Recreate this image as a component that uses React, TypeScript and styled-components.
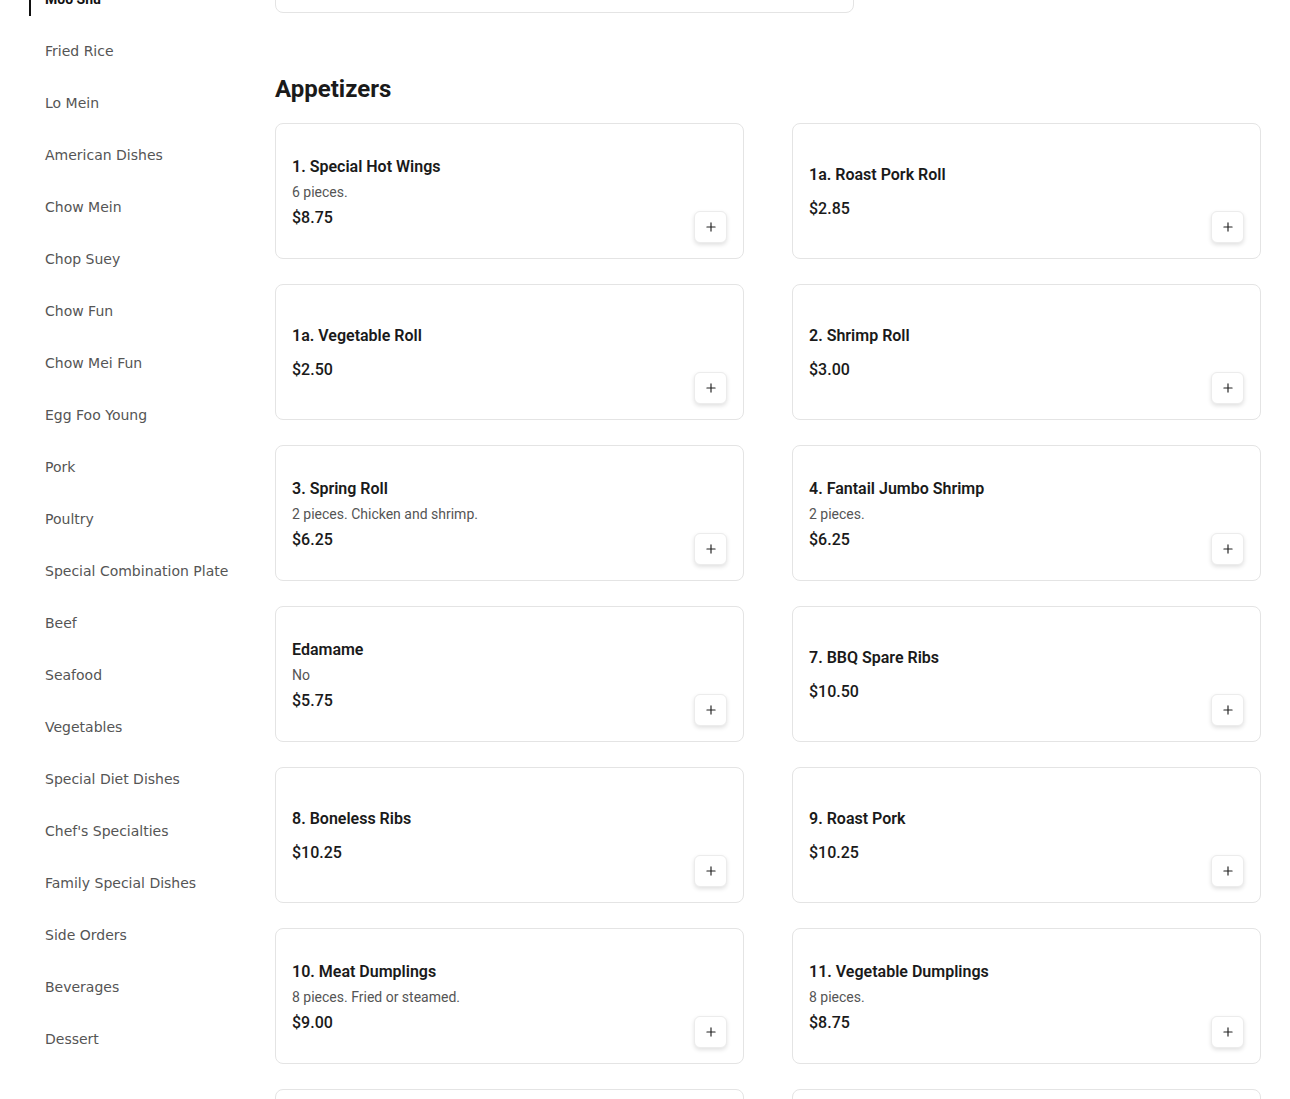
import styled, { createGlobalStyle } from "styled-components";
import { Plus } from "lucide-react";

const GlobalStyle = createGlobalStyle`
  *, *::before, *::after { box-sizing: border-box; }
  body {
    margin: 0;
    background: #ffffff;
    font-family: Roboto, "Liberation Sans", sans-serif;
    color: #1a1a1a;
    overflow: hidden;
  }
`;

const Page = styled.div`
  display: flex;
  gap: 30px;
  padding: 0 29px 0 29px;
  margin-top: -140px;
`;

const Sidebar = styled.nav`
  width: 216px;
  flex-shrink: 0;
  display: flex;
  flex-direction: column;
  gap: 18px;
  padding-top: 122px;
`;

const NavItem = styled.a<{ $active?: boolean }>`
  display: block;
  height: 34px;
  line-height: 18px;
  padding: 8px 0 8px 14px;
  border-left: 2px solid ${(p) => (p.$active ? "#111111" : "transparent")};
  font-family: ${(p) =>
    p.$active ? 'Roboto, "Liberation Sans", sans-serif' : '"DejaVu Sans", sans-serif'};
  font-size: 14px;
  font-weight: ${(p) => (p.$active ? 700 : 400)};
  color: ${(p) => (p.$active ? "#111111" : "#555555")};
  text-decoration: none;
  white-space: nowrap;
  cursor: pointer;
`;

const Main = styled.main`
  flex: 1;
  padding-top: 17px;
`;

const PrevCard = styled.div`
  width: 579px;
  height: 136px;
  border: 1px solid #e4e4e4;
  border-radius: 8px;
`;

const Section = styled.section`
  margin-top: 60px;
`;

const SectionTitle = styled.h2`
  margin: 0 0 18px;
  font-size: 24px;
  line-height: 32px;
  font-weight: 700;
  color: #1a1a1a;
`;

const Grid = styled.div`
  display: grid;
  grid-template-columns: 1fr 1fr;
  column-gap: 48px;
  row-gap: 25px;
`;

const Card = styled.div`
  display: flex;
  align-items: stretch;
  min-height: 136px;
  padding: 16px;
  border: 1px solid #e4e4e4;
  border-radius: 8px;
  background: #ffffff;
`;

const Info = styled.div`
  flex: 1;
  display: flex;
  flex-direction: column;
  justify-content: center;
  padding-top: 2px;
`;

const ItemName = styled.h3`
  margin: 0 0 3px;
  font-size: 16px;
  line-height: 24px;
  font-weight: 600;
  color: #1a1a1a;
`;

const ItemDesc = styled.p`
  margin: 0 0 4px;
  font-size: 14px;
  line-height: 20px;
  color: #555555;
`;

const ItemPrice = styled.div<{ $spaced?: boolean }>`
  margin-top: ${(p) => (p.$spaced ? "7px" : "0")};
  font-size: 16px;
  line-height: 24px;
  font-weight: 500;
  color: #1a1a1a;
`;

const AddButton = styled.button`
  align-self: flex-end;
  width: 33px;
  height: 32px;
  margin-bottom: -1px;
  display: flex;
  align-items: center;
  justify-content: center;
  padding: 0;
  border: 1px solid #ececec;
  border-radius: 6px;
  background: #ffffff;
  box-shadow: 0 2px 4px rgba(0, 0, 0, 0.12);
  color: #222222;
  cursor: pointer;
`;

const categories = [
  "Moo Shu",
  "Fried Rice",
  "Lo Mein",
  "American Dishes",
  "Chow Mein",
  "Chop Suey",
  "Chow Fun",
  "Chow Mei Fun",
  "Egg Foo Young",
  "Pork",
  "Poultry",
  "Special Combination Plate",
  "Beef",
  "Seafood",
  "Vegetables",
  "Special Diet Dishes",
  "Chef's Specialties",
  "Family Special Dishes",
  "Side Orders",
  "Beverages",
  "Dessert",
];

const appetizers: { name: string; desc?: string; price: string }[] = [
  { name: "1. Special Hot Wings", desc: "6 pieces.", price: "$8.75" },
  { name: "1a. Roast Pork Roll", price: "$2.85" },
  { name: "1a. Vegetable Roll", price: "$2.50" },
  { name: "2. Shrimp Roll", price: "$3.00" },
  { name: "3. Spring Roll", desc: "2 pieces. Chicken and shrimp.", price: "$6.25" },
  { name: "4. Fantail Jumbo Shrimp", desc: "2 pieces.", price: "$6.25" },
  { name: "Edamame", desc: "No", price: "$5.75" },
  { name: "7. BBQ Spare Ribs", price: "$10.50" },
  { name: "8. Boneless Ribs", price: "$10.25" },
  { name: "9. Roast Pork", price: "$10.25" },
  { name: "10. Meat Dumplings", desc: "8 pieces. Fried or steamed.", price: "$9.00" },
  { name: "11. Vegetable Dumplings", desc: "8 pieces.", price: "$8.75" },
  { name: "12. Scallion Pancake", price: "$6.50" },
  { name: "13. Crab Rangoon", desc: "8 pieces.", price: "$8.25" },
];

function MenuCard(props: { name: string; desc?: string; price: string }) {
  return (
    <Card>
      <Info>
        <ItemName>{props.name}</ItemName>
        {props.desc && <ItemDesc>{props.desc}</ItemDesc>}
        <ItemPrice $spaced={!props.desc}>{props.price}</ItemPrice>
      </Info>
      <AddButton aria-label={`Add ${props.name}`}>
        <Plus size={14} strokeWidth={2} />
      </AddButton>
    </Card>
  );
}

export default function App() {
  return (
    <>
      <GlobalStyle />
      <Page>
        <Sidebar>
          {categories.map((c, i) => (
            <NavItem key={c} $active={i === 0}>
              {c}
            </NavItem>
          ))}
        </Sidebar>
        <Main>
          <PrevCard />
          <Section>
            <SectionTitle>Appetizers</SectionTitle>
            <Grid>
              {appetizers.map((item) => (
                <MenuCard key={item.name} {...item} />
              ))}
            </Grid>
          </Section>
        </Main>
      </Page>
    </>
  );
}
